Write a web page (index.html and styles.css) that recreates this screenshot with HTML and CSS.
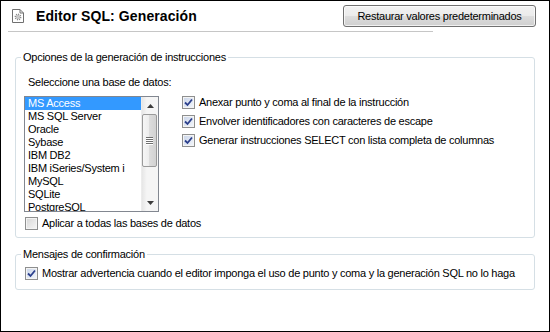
FILE: index.html
```html
<!DOCTYPE html>
<html lang="es">
<head>
    <meta charset="UTF-8">
    <title>Editor SQL: Generación</title>
    <link rel="stylesheet" href="styles.css">
</head>
<body>
    <div class="dialog">
        <div class="header">
            <div class="title-bar">
                <svg class="page-icon" width="12" height="14" viewBox="0 0 12 14">
                    <path d="M0.5 0.5 H8 L11.5 4 V13.5 H0.5 Z" fill="#fff" stroke="#707070"/>
                    <path d="M8 0.5 V4 H11.5" fill="none" stroke="#707070"/>
                    <circle cx="6" cy="8" r="2.6" fill="none" stroke="#8a8a8a" stroke-width="1.6" stroke-dasharray="1.1 0.9"/>
                    <circle cx="6" cy="8" r="1.7" fill="#a0a0a0"/>
                    <circle cx="6" cy="8" r="0.8" fill="#fff"/>
                </svg>
                <h1 class="title">Editor SQL: Generación</h1>
            </div>
            <button class="btn">Restaurar valores predeterminados</button>
        </div>

        <fieldset class="group group-gen">
            <legend>Opciones de la generación de instrucciones</legend>
            <div class="gen-body">
                <div class="db-label">Seleccione una base de datos:</div>
                <div class="listbox">
                    <ul class="list">
                        <li class="selected">MS Access</li>
                        <li>MS SQL Server</li>
                        <li>Oracle</li>
                        <li>Sybase</li>
                        <li>IBM DB2</li>
                        <li>IBM iSeries/System i</li>
                        <li>MySQL</li>
                        <li>SQLite</li>
                        <li>PostgreSQL</li>
                    </ul>
                    <div class="scrollbar">
                        <div class="sb-btn">
                            <svg width="7" height="4" viewBox="0 0 7 4"><path d="M0 4 L3.5 0 L7 4 Z" fill="#3c3c3c"/></svg>
                        </div>
                        <div class="sb-track">
                            <div class="sb-thumb">
                                <span class="grip"></span>
                                <span class="grip"></span>
                                <span class="grip"></span>
                                <span class="grip"></span>
                            </div>
                        </div>
                        <div class="sb-btn">
                            <svg width="7" height="4" viewBox="0 0 7 4"><path d="M0 0 L3.5 4 L7 0 Z" fill="#3c3c3c"/></svg>
                        </div>
                    </div>
                </div>
                <div class="options">
                    <label class="check-row">
                        <span class="check on"><svg width="9" height="9" viewBox="0 0 9 9"><path d="M1 4.5 L3.5 7 L8 1.5" fill="none" stroke="#2b3f8c" stroke-width="1.8"/></svg></span>
                        Anexar punto y coma al final de la instrucción
                    </label>
                    <label class="check-row">
                        <span class="check on"><svg width="9" height="9" viewBox="0 0 9 9"><path d="M1 4.5 L3.5 7 L8 1.5" fill="none" stroke="#2b3f8c" stroke-width="1.8"/></svg></span>
                        Envolver identificadores con caracteres de escape
                    </label>
                    <label class="check-row">
                        <span class="check on"><svg width="9" height="9" viewBox="0 0 9 9"><path d="M1 4.5 L3.5 7 L8 1.5" fill="none" stroke="#2b3f8c" stroke-width="1.8"/></svg></span>
                        Generar instrucciones SELECT con lista completa de columnas
                    </label>
                </div>
                <label class="check-row apply">
                    <span class="check"></span>
                    Aplicar a todas las bases de datos
                </label>
            </div>
        </fieldset>

        <fieldset class="group group-confirm">
            <legend>Mensajes de confirmación</legend>
            <label class="check-row">
                <span class="check on"><svg width="9" height="9" viewBox="0 0 9 9"><path d="M1 4.5 L3.5 7 L8 1.5" fill="none" stroke="#2b3f8c" stroke-width="1.8"/></svg></span>
                Mostrar advertencia cuando el editor imponga el uso de punto y coma y la generación SQL no lo haga
            </label>
        </fieldset>
    </div>
</body>
</html>
```

FILE: styles.css
```css
* {
    margin: 0;
    padding: 0;
    box-sizing: border-box;
}

body {
    font-family: 'Liberation Sans', Arial, sans-serif;
    font-size: 11px;
    letter-spacing: -0.25px;
    color: #000;
    background: #fff;
}

.dialog {
    width: 550px;
    height: 332px;
    border: 1px solid #000;
    background: #fff;
}

/* header: title with rule, button on top right */
.header {
    display: grid;
    grid-template-columns: 1fr;
    padding: 0 13px 0 7px;
}

.title-bar {
    grid-area: 1 / 1;
    width: 425px;
    height: 31px;
    display: flex;
    align-items: center;
    gap: 12px;
    padding-left: 4px;
    border-bottom: 1px solid #c6c6c6;
}

.page-icon {
    flex: none;
}

.title {
    font-size: 14px;
    font-weight: bold;
    letter-spacing: 0.1px;
}

.btn {
    grid-area: 1 / 1;
    justify-self: end;
    align-self: start;
    margin-top: 4px;
    width: 193px;
    height: 22px;
    border: 1px solid #707070;
    border-radius: 3px;
    background: linear-gradient(#f2f2f2 0%, #ebebeb 50%, #dddddd 50%, #cfcfcf 100%);
    box-shadow: inset 0 0 0 1px rgba(255,255,255,0.7);
    font-family: inherit;
    font-size: 11px;
    letter-spacing: -0.25px;
    color: #000;
}

/* group boxes */
.group {
    margin: 0 14px;
    border: 1px solid #d5dfe5;
    border-radius: 3px;
}

.group legend {
    line-height: 13px;
    padding: 0 2px;
}

.group-gen {
    margin-top: 19px;
    padding: 12px 8px 7px 8px;
}

.group-gen legend {
    margin-left: -3px;
}

.group-confirm {
    margin-top: 10px;
    padding: 6px 9px 9px 9px;
}

.group-confirm legend {
    margin-left: -4px;
}

.gen-body {
    display: grid;
    grid-template-columns: 135px 1fr;
    column-gap: 23px;
}

.db-label {
    grid-column: 1 / -1;
    line-height: 13px;
    padding-left: 4px;
    margin-bottom: 7px;
}

/* list box */
.listbox {
    display: flex;
    height: 116px;
    border: 1px solid #828790;
    background: #fff;
}

.list {
    flex: 1;
    list-style: none;
    overflow: hidden;
}

.list li {
    height: 13px;
    line-height: 13px;
    padding-left: 3px;
    white-space: nowrap;
}

.list li.selected {
    background: #3399ff;
    color: #fff;
}

.scrollbar {
    width: 17px;
    display: flex;
    flex-direction: column;
    background: linear-gradient(to right, #e6e6e6, #f5f5f5 30%, #f5f5f5);
    border-left: 1px solid #ececec;
}

.sb-btn {
    height: 17px;
    display: flex;
    align-items: center;
    justify-content: center;
}

.sb-track {
    flex: 1;
}

.sb-thumb {
    height: 53px;
    margin: 0 1px 0 0;
    border: 1px solid #9a9a9a;
    border-radius: 2px;
    background: linear-gradient(to right, #f6f6f6, #ececec 50%, #dcdcdc 50%, #d2d2d2);
    display: flex;
    flex-direction: column;
    align-items: center;
    justify-content: center;
    gap: 1px;
}

.grip {
    width: 7px;
    height: 1px;
    background: #6e6e6e;
    box-shadow: 0 1px 0 #fff;
}

/* check boxes */
.options {
    display: flex;
    flex-direction: column;
    gap: 6px;
}

.check-row {
    display: flex;
    align-items: center;
    gap: 4px;
    height: 13px;
    line-height: 13px;
    white-space: nowrap;
}

.check {
    flex: none;
    width: 13px;
    height: 13px;
    border: 1px solid #8e8f8f;
    background: linear-gradient(135deg, #d6d6d6, #f6f6f6);
    box-shadow: inset 0 0 0 1px #f4f4f4;
    display: flex;
    align-items: center;
    justify-content: center;
}

.check.on {
    background: linear-gradient(135deg, #c9d4e8, #f4f7fc);
}

.apply {
    grid-column: 1 / -1;
    margin: 5px 0 0 1px;
}
```
